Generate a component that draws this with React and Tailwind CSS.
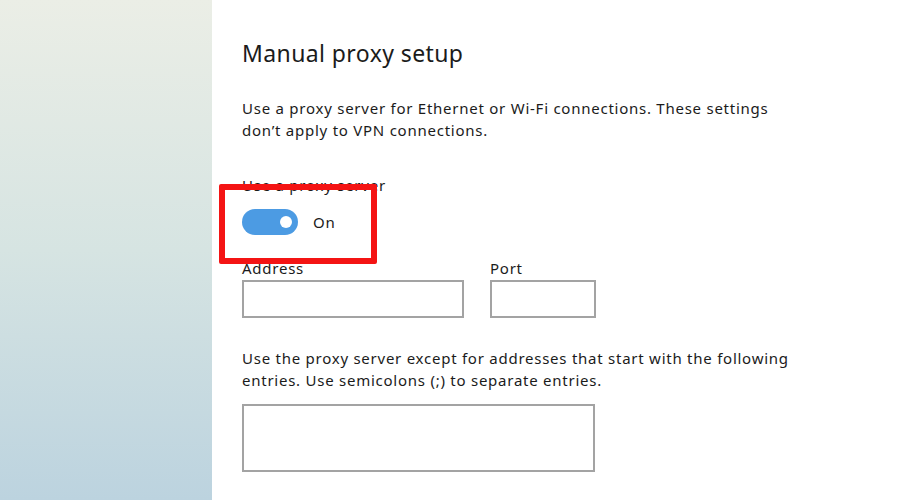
import React from 'react'

const font = { fontFamily: '"Noto Sans", "Open Sans", sans-serif' }

export default function App() {
  return (
    <div className="flex h-[500px] w-[900px] overflow-hidden bg-white" style={font}>
      {/* left backdrop */}
      <div className="w-[212px] shrink-0 bg-gradient-to-b from-[#ebeee6] via-[#d6e4e2] to-[#bcd3df]" />

      {/* settings panel */}
      <div className="relative flex-1 pl-[30px] pt-[38px] text-[#1b1b1b]">
        <h1 className="text-[23px] leading-[30px] tracking-[0.4px]">Manual proxy setup</h1>

        <p className="mt-[29px] w-[545px] text-[15px] leading-[22px] tracking-[0.75px]">
          Use a proxy server for Ethernet or Wi-Fi connections. These settings don’t apply to VPN connections.
        </p>

        <div className="mt-[34px] text-[15px] leading-[20px] tracking-[0.75px]">Use a proxy server</div>
        <div className="mt-[14px] flex items-center gap-[15px]">
          <div className="flex h-[26px] w-[56px] items-center justify-end rounded-full bg-[#4c9be3] pr-[6px]">
            <div className="h-[12px] w-[12px] rounded-full bg-white" />
          </div>
          <span className="text-[15px] tracking-[0.75px]">On</span>
        </div>

        <div className="mt-[23px] flex gap-[26px]">
          <div className="flex flex-col">
            <span className="text-[15px] leading-[20px] tracking-[0.75px]">Address</span>
            <div className="mt-[2px] h-[38px] w-[222px] border-2 border-[#a3a3a3]" />
          </div>
          <div className="flex flex-col">
            <span className="text-[15px] leading-[20px] tracking-[0.75px]">Port</span>
            <div className="mt-[2px] h-[38px] w-[106px] border-2 border-[#a3a3a3]" />
          </div>
        </div>

        <p className="mt-[29px] w-[565px] text-[15px] leading-[22px] tracking-[0.75px]">
          Use the proxy server except for addresses that start with the following entries. Use semicolons (;) to separate entries.
        </p>
        <div className="mt-[13px] h-[68px] w-[353px] border-2 border-[#a3a3a3]" />

        {/* highlight annotation */}
        <div className="absolute left-[7px] top-[184px] h-[80px] w-[158px] rounded-[2px] border-[6px] border-[#f41414]" />
      </div>
    </div>
  )
}
